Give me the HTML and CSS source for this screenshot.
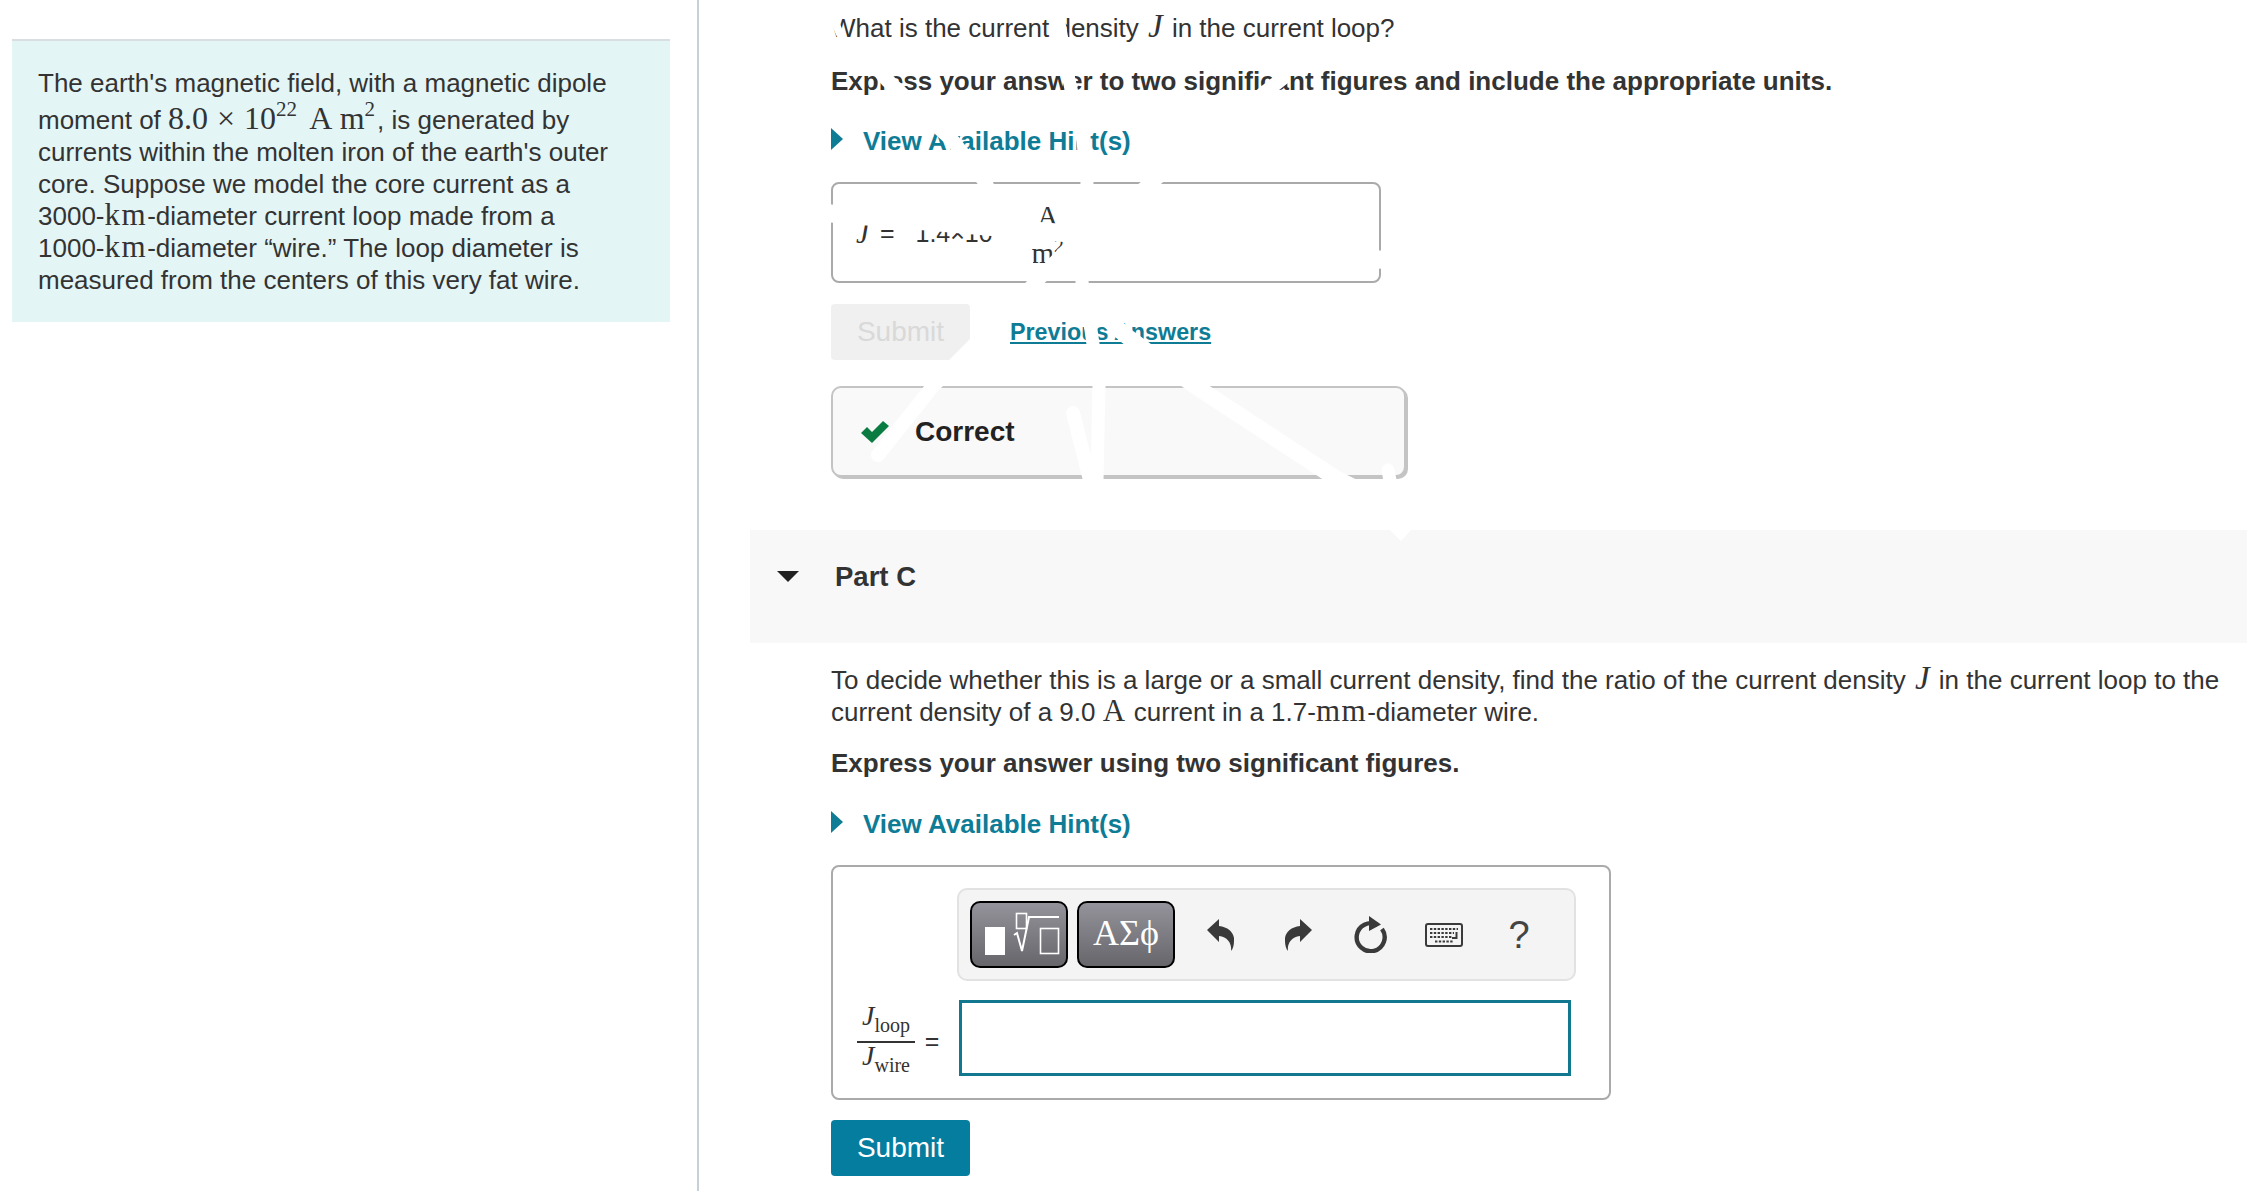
FILE: index.html
```html
<!DOCTYPE html>
<html lang="en">
<head>
    <meta charset="UTF-8">
    <meta name="viewport" content="width=device-width, initial-scale=1.0">
    <title>Part C - current density</title>
    <link rel="stylesheet" href="styles.css">
</head>
<body>
    <aside class="sidebar">
        <div class="intro">
            The earth's magnetic field, with a magnetic dipole moment of <span class="math big">8.0 × 10<sup>22</sup> A m<sup>2</sup></span>, is generated by currents within the molten iron of the earth's outer core. Suppose we model the core current as a 3000-<span class="math">km</span>-diameter current loop made from a 1000-<span class="math">km</span>-diameter “wire.” The loop diameter is measured from the centers of this very fat wire.
        </div>
    </aside>
    <main class="content">
        <section class="part">
            <p class="question">What is the current density <i class="math var">J</i> in the current loop?</p>
            <p class="instruction">Express your answer to two significant figures and include the appropriate units.</p>
            <a class="hints" href="#"><span class="arrow"></span>View Available Hint(s)</a>
            <div class="answer-box">
                <i class="math var">J</i><span class="equals">=</span><span class="value">1.4×10<sup>7</sup></span>
                <span class="unit"><span class="unit-top">A</span><span class="unit-bottom">m<sup>2</sup></span></span>
            </div>
            <div class="actions">
                <button class="submit disabled">Submit</button>
                <a class="previous" href="#">Previous Answers</a>
            </div>
            <div class="feedback">
                <svg class="check" width="28" height="22" viewBox="0 0 28 22"><path d="M0 12 L6 6 L11 11 L22 0 L28 5 L11 22 Z" fill="#0a7c42"/></svg>
                <span>Correct</span>
            </div>
        </section>
        <div class="part-header">
            <span class="caret"></span>
            <h2>Part C</h2>
        </div>
        <section class="part">
            <p class="question lead">To decide whether this is a large or a small current density, find the ratio of the current density <i class="math var">J</i> in the current loop to the current density of a 9.0 <span class="math">A</span> current in a 1.7-<span class="math">mm</span>-diameter wire.</p>
            <p class="instruction second">Express your answer using two significant figures.</p>
            <a class="hints hints-low" href="#"><span class="arrow"></span>View Available Hint(s)</a>
            <div class="editor">
                <div class="toolbar">
                    <button class="tool-btn">
                        <svg width="94" height="63" viewBox="0 0 94 63">
                            <rect x="13" y="24" width="20" height="28" fill="#fff"/>
                            <rect x="44.5" y="10.5" width="10" height="15" fill="none" stroke="#fff" stroke-width="1.6"/>
                            <path d="M42 32 L45 30 L50 48 L57 14 H87" fill="none" stroke="#fff" stroke-width="2"/>
                            <rect x="68.5" y="25.5" width="18" height="25" fill="none" stroke="#fff" stroke-width="1.6"/>
                        </svg>
                    </button>
                    <button class="tool-btn greek">ΑΣϕ</button>
                    <span class="tool undo">
                        <svg width="27" height="32" viewBox="0 0 27 32"><path d="M0 11 L12 0 V7 C22 8 28 15 27 22 C27 26 26 30 24 32 C25 25 21 18 12 17 V23 Z" fill="#3a3a3a"/></svg>
                    </span>
                    <span class="tool redo">
                        <svg width="27" height="32" viewBox="0 0 27 32"><path d="M27 11 L15 0 V7 C5 8 -1 15 0 22 C0 26 1 30 3 32 C2 25 6 18 15 17 V23 Z" fill="#3a3a3a"/></svg>
                    </span>
                    <span class="tool reload">
                        <svg width="34" height="37" viewBox="0 0 34 37"><path d="M24.5 9 A14 14 0 1 0 29 13" fill="none" stroke="#3a3a3a" stroke-width="4.4"/><path d="M16 0 L28 8.5 L16 15 Z" fill="#3a3a3a"/></svg>
                    </span>
                    <span class="tool keys">
                        <svg width="38" height="24" viewBox="0 0 38 24">
                            <rect x="1" y="1" width="36" height="22" rx="2" fill="none" stroke="#3a3a3a" stroke-width="2"/>
                            <path d="M5 6 H33 M5 10 H29 M5 14 H27 M10 18.5 H28" fill="none" stroke="#3a3a3a" stroke-width="2.2" stroke-dasharray="2.4 1.4"/>
                            <path d="M31.5 9 V15 H27" fill="none" stroke="#3a3a3a" stroke-width="2"/>
                        </svg>
                    </span>
                    <span class="tool help">?</span>
                </div>
                <div class="input-row">
                    <div class="ratio">
                        <span class="ratio-top"><i>J</i><sub>loop</sub></span>
                        <span class="ratio-bottom"><i>J</i><sub>wire</sub></span>
                    </div>
                    <span class="equals">=</span>
                    <div class="math-input"></div>
                </div>
            </div>
            <button class="submit">Submit</button>
        </section>
    </main>
    <svg class="scratches" width="2247" height="1191" viewBox="0 0 2247 1191">
        <g fill="none" stroke="#fff" stroke-linecap="round" stroke-linejoin="round">
            <path stroke-width="13" d="M1058 17 L1069 80 L1083 141 L1087 182 L1082 282 L1091 330 L1099 386 L1097 480"/>
            <path stroke-width="14" d="M1283 78 L1152 182 L1062 255 L1036 282 L976 343 L933 386 L878 455"/>
            <path stroke-width="8" d="M834 20 L840 34"/>
            <path stroke-width="14" d="M872 62 L887 80 L953 141 L985 182 L1035 282 L1040 298"/>
            <path stroke-width="14" d="M1073 413 L1090 480"/>
            <path stroke-width="18" d="M825 213 L1385 260"/>
            <path stroke-width="16" d="M1104 316 L1125 335 L1195 386 L1337 479 L1380 500"/>
            <path stroke-width="13" d="M1388 470 L1399 528"/>
        </g>
        <path d="M1390 530 H1411 L1401 541 Z" fill="#fff"/>
    </svg>
</body>
</html>
```

FILE: styles.css
```css
html, body {
    margin: 0;
    height: 1191px;
    overflow: hidden;
}
body {
    display: flex;
    position: relative;
    font-family: "Liberation Sans", Arial, sans-serif;
    font-size: 26px;
    line-height: 32px;
    color: #333;
    background: #fff;
}
.sidebar {
    width: 697px;
    flex: none;
    padding-top: 39px;
    border-right: 2px solid #c6d1d7;
}
.intro {
    width: 658px;
    margin-left: 12px;
    box-sizing: border-box;
    padding: 26px 50px 26px 26px;
    background: #e4f5f6;
    border-top: 2px solid #d9dfe1;
}
.math {
    font-family: "Liberation Serif", "DejaVu Serif", serif;
    font-size: 31px;
    line-height: 0;
    letter-spacing: 1.5px;
}
.big {
    margin-right: 2px;
    font-size: 32px;
    letter-spacing: 0;
    word-spacing: 1px;
}
.big sup {
    font-size: 21px;
    line-height: 21px;
    vertical-align: 13px;
}
.big sup:first-of-type {
    margin-right: 5px;
}
.var {
    margin: 0 2px;
    font-style: italic;
    font-size: 33px;
    letter-spacing: 0;
}
sup {
    font-size: 68%;
    line-height: 0;
}
.content {
    flex: 1;
    min-width: 0;
    padding: 12px 0 0 51px;
}
.part {
    padding-left: 81px;
}
p {
    margin: 0;
}
.instruction {
    margin-top: 21px;
    font-weight: bold;
}
.instruction.second {
    margin-top: 19px;
}
.hints {
    display: flex;
    align-items: center;
    margin-top: 28px;
    font-weight: bold;
    color: #0f7c96;
    text-decoration: none;
}
.hints-low {
    margin-top: 29px;
}
.arrow {
    width: 0;
    height: 0;
    margin: -4px 20px 0 0;
    border-left: 12px solid #0f7c96;
    border-top: 11px solid transparent;
    border-bottom: 11px solid transparent;
}
.answer-box {
    display: flex;
    align-items: center;
    width: 550px;
    height: 101px;
    margin-top: 25px;
    box-sizing: border-box;
    padding-left: 23px;
    border: 2px solid #aaa;
    border-radius: 8px;
    font-size: 25px;
}
.answer-box .var {
    margin: 0;
    font-size: 29px;
}
.answer-box .equals {
    margin: 0 21px 0 11px;
}
.value {
    margin-right: 27px;
}
.unit {
    display: flex;
    flex-direction: column;
    align-items: center;
    font-family: "Liberation Serif", serif;
    font-size: 29px;
}
.unit-top {
    line-height: 38px;
    padding: 0 8px;
    border-bottom: 2px solid #333;
}
.unit-bottom {
    line-height: 32px;
}
.actions {
    display: flex;
    align-items: center;
    margin-top: 21px;
}
.submit {
    display: block;
    width: 139px;
    height: 56px;
    padding: 0;
    border: none;
    border-radius: 4px;
    background: #057d9f;
    color: #fff;
    font-family: inherit;
    font-size: 28px;
}
.submit.disabled {
    background: #f0f0f0;
    color: #d9d9d9;
}
.part > .submit {
    margin-top: 20px;
}
.previous {
    margin-left: 40px;
    font-size: 23.3px;
    font-weight: bold;
    color: #0f7c96;
}
.feedback {
    display: flex;
    align-items: center;
    width: 575px;
    height: 91px;
    margin-top: 26px;
    box-sizing: border-box;
    padding-left: 28px;
    background: #f9f9f9;
    border: 2px solid #c4c4c4;
    border-radius: 10px;
    box-shadow: 2px 2px 0 #c4c4c4;
    font-size: 28px;
    font-weight: bold;
    color: #222;
}
.check {
    margin-right: 26px;
}
.part-header {
    display: flex;
    align-items: center;
    height: 113px;
    margin-top: 53px;
    box-sizing: border-box;
    padding-bottom: 20px;
    background: #f8f8f8;
}
.caret {
    width: 0;
    height: 0;
    margin: 0 36px 0 27px;
    border-top: 11px solid #222;
    border-left: 11px solid transparent;
    border-right: 11px solid transparent;
}
h2 {
    margin: 0;
    font-size: 27.5px;
    font-weight: bold;
}
.lead {
    margin-top: 21px;
    padding-right: 20px;
}
.editor {
    width: 780px;
    height: 235px;
    margin-top: 25px;
    box-sizing: border-box;
    padding-top: 21px;
    border: 2px solid #aaa;
    border-radius: 8px;
}
.toolbar {
    display: flex;
    align-items: center;
    width: 619px;
    height: 93px;
    margin-left: 124px;
    box-sizing: border-box;
    padding-left: 11px;
    background: #f4f4f4;
    border: 2px solid #e2e2e2;
    border-radius: 10px;
}
.tool-btn {
    display: flex;
    align-items: center;
    justify-content: center;
    width: 98px;
    height: 67px;
    margin-right: 9px;
    padding: 0;
    background: linear-gradient(#94939b, #66666b);
    border: 2px solid #000;
    border-radius: 10px;
}
.greek {
    padding-bottom: 4px;
    font-family: "Liberation Serif", serif;
    font-size: 36px;
    color: #fff;
}
.tool {
    display: flex;
    justify-content: center;
    width: 40px;
}
.undo {
    margin-left: 16px;
}
.redo {
    margin-left: 38px;
}
.reload {
    margin-left: 32px;
}
.keys {
    margin-left: 34px;
}
.help {
    margin-left: 35px;
    font-size: 38px;
    color: #444;
}
.input-row {
    display: flex;
    align-items: center;
    margin-top: 19px;
}
.ratio {
    display: flex;
    flex-direction: column;
    align-items: center;
    width: 58px;
    margin-left: 24px;
    font-family: "Liberation Serif", serif;
    font-size: 28px;
}
.ratio sub {
    font-size: 20px;
    line-height: 0;
}
.ratio-top {
    width: 100%;
    padding-bottom: 10px;
    text-align: center;
    line-height: 30px;
    border-bottom: 2px solid #333;
}
.ratio-bottom {
    margin-bottom: 7px;
    line-height: 25px;
}
.input-row .equals {
    width: 44px;
    box-sizing: border-box;
    padding-right: 10px;
    padding-top: 6px;
    text-align: center;
    font-size: 25px;
}
.math-input {
    width: 612px;
    height: 76px;
    box-sizing: border-box;
    border: 3px solid #11788f;
}
.scratches {
    position: absolute;
    top: 0;
    left: 0;
    pointer-events: none;
}
```
